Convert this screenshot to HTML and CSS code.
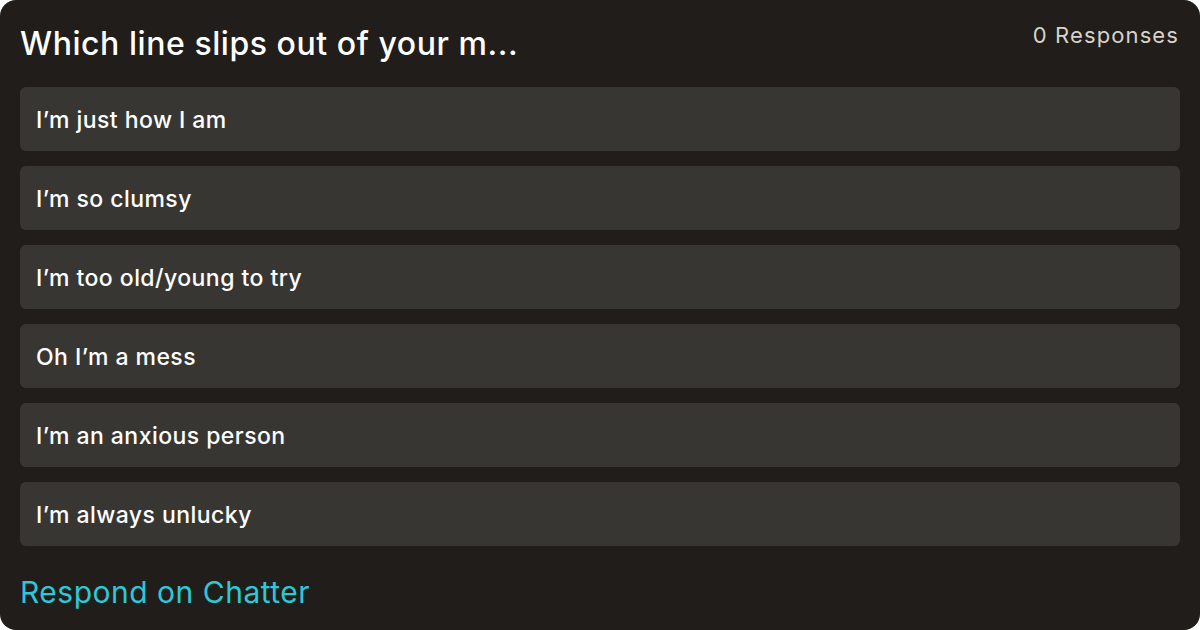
FILE: index.html
```html
<!DOCTYPE html>
<html>
<head>
<meta charset="utf-8">
<link rel="stylesheet" href="styles.css">
</head>
<body>
<div class="card">
  <div class="header">
    <div class="title">Which line slips out of your m...</div>
    <div class="count">0 Responses</div>
  </div>
  <div class="options">
    <div class="option">I’m just how I am</div>
    <div class="option">I’m so clumsy</div>
    <div class="option">I’m too old/young to try</div>
    <div class="option">Oh I’m a mess</div>
    <div class="option">I’m an anxious person</div>
    <div class="option">I’m always unlucky</div>
  </div>
  <div class="cta">Respond on Chatter</div>
</div>
</body>
</html>
```
FILE: styles.css
```css
html, body {
  margin: 0;
  padding: 0;
  background: #ffffff;
}
body {
  font-family: Inter, "Liberation Sans", sans-serif;
}
.card {
  width: 1200px;
  height: 630px;
  box-sizing: border-box;
  background: #201d1a;
  border-radius: 16px;
  padding: 20px 20px 0 20px;
  display: flex;
  flex-direction: column;
}
.header {
  display: flex;
  justify-content: space-between;
  align-items: flex-start;
  height: 48px;
  margin-bottom: 19px;
}
.title {
  color: #ffffff;
  font-size: 32px;
  font-weight: 500;
  line-height: 48px;
  letter-spacing: 0.55px;
}
.count {
  color: #d7d3c9;
  font-size: 22px;
  line-height: 30px;
  letter-spacing: 1.1px;
  margin-right: 1px;
}
.options {
  display: flex;
  flex-direction: column;
  gap: 15px;
}
.option {
  height: 64px;
  box-sizing: border-box;
  background: #383633;
  border-radius: 6px;
  display: flex;
  align-items: center;
  padding: 2px 0 0 16px;
  color: #ffffff;
  font-size: 23px;
  font-weight: 500;
  letter-spacing: 0.45px;
}
.cta {
  margin-top: 26px;
  color: #2ec8d6;
  font-size: 30px;
  line-height: 40px;
  letter-spacing: 0.5px;
}
```
